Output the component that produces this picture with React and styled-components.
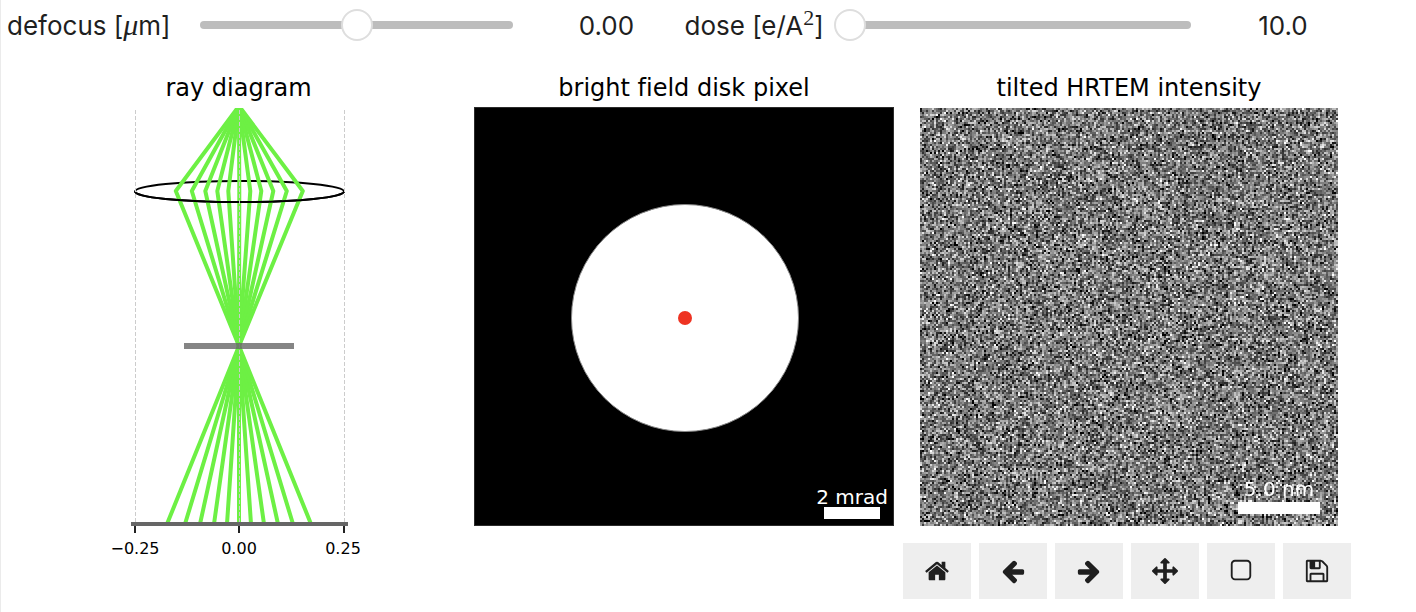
import React, { useEffect, useRef, useState } from "react";
import styled, { createGlobalStyle } from "styled-components";

const Global = createGlobalStyle`
  * { box-sizing: border-box; }
  body { margin: 0; background: #fff; }
`;

const Page = styled.main`
  min-height: 100vh;
  border-left: 1px solid #ebebeb;
  font-family: "DejaVu Sans", sans-serif;
  font-variant-ligatures: none;
  color: #000;
`;

const Controls = styled.form`
  display: grid;
  grid-template-columns: 178px 343fr 156px 150px 371fr 154px;
  align-items: center;
  height: 50px;
  padding: 0 56px 0 6px;
  font-family: Inter, "Liberation Sans", sans-serif;
  font-size: 26px;
  color: #1f1f1f;
`;

const Label = styled.label`
  padding-top: 2px;
  white-space: nowrap;
  line-height: 32px;
`;

const Mu = styled.i`
  font-family: "Liberation Serif", serif;
  font-size: 30px;
  line-height: 1;
`;

const Sup = styled.sup`
  font-family: "Liberation Serif", serif;
  font-size: 22px;
  line-height: 0;
`;

const Value = styled.output`
  padding-top: 2px;
  text-align: center;
  line-height: 32px;
`;

const SliderBox = styled.div`
  display: grid;
  align-items: center;
  &::before {
    content: "";
    grid-area: 1 / 1;
    height: 8px;
    margin: 0 15px;
    border-radius: 4px;
    background: #bdbdbd;
  }
`;

const Range = styled.input`
  grid-area: 1 / 1;
  appearance: none;
  width: 100%;
  height: 32px;
  margin: 0;
  background: transparent;
  &::-webkit-slider-thumb {
    appearance: none;
    width: 32px;
    height: 32px;
    border: 2px solid #dedede;
    border-radius: 50%;
    background: #fff;
  }
`;

const Figure = styled.section`
  display: grid;
  grid-template-columns: 447fr 420fr 418fr;
  column-gap: 26px;
  align-items: start;
  padding: 22px 78px 0 0;
`;

const Panel = styled.figure`
  display: flex;
  flex-direction: column;
  margin: 0;
  padding-left: ${(p) => (p.$indent ? "28px" : "0")};
`;

const Title = styled.figcaption`
  height: ${(p) => p.$height || 35}px;
  font-size: 24px;
  line-height: 32px;
  text-align: center;
  white-space: nowrap;
`;

const RaySvg = styled.svg`
  display: block;
  align-self: center;
  width: 260px;
  height: 454px;
`;

const Plot = styled.div`
  display: grid;
  aspect-ratio: ${(p) => p.$ratio || "1"};
  overflow: hidden;
  background: #000;
`;

const DiskSvg = styled.svg`
  grid-area: 1 / 1;
  width: 100%;
  height: 100%;
`;

const Noise = styled.canvas`
  grid-area: 1 / 1;
  width: 100%;
  height: 100%;
  image-rendering: pixelated;
`;

const ScaleBar = styled.div`
  grid-area: 1 / 1;
  align-self: end;
  justify-self: end;
  z-index: 1;
  display: flex;
  flex-direction: column;
  align-items: center;
  gap: ${(p) => p.$gap || 0}px;
  width: ${(p) => p.$width}px;
  margin: 0 ${(p) => p.$right}px ${(p) => p.$bottom}px 0;
  color: #fff;
  font-size: 20px;
  line-height: 20px;
  white-space: nowrap;
  &::after {
    content: "";
    width: 100%;
    height: 12px;
    background: #fff;
  }
`;

const Toolbar = styled.nav`
  display: flex;
  justify-content: flex-end;
  gap: 8px;
  margin-top: -18px;
  padding: 0 65px 12px 0;
`;

const ToolButton = styled.button`
  display: grid;
  place-items: center;
  width: 68px;
  height: 56px;
  padding: 0;
  border: 0;
  background: #eee;
  color: #1f1f1f;
  cursor: pointer;
`;

const ToolIcon = styled.svg`
  width: 26px;
  height: 26px;
  fill: currentColor;
`;

const TOOLS = [
  ["Home", "M1472 992v480q0 26-19 45t-45 19h-384v-384h-256v384h-384q-26 0-45-19t-19-45v-480q0-1 .5-3t.5-3l575-474 575 474q1 2 1 6zm223-69l-62 74q-8 9-21 11h-3q-13 0-21-7l-692-577-692 577q-12 8-24 7-13-2-21-11l-62-74q-8-10-7-23.5t11-21.5l719-599q32-26 76-26t76 26l244 204v-195q0-14 9-23t23-9h192q14 0 23 9t9 23v408l219 182q10 8 11 21.5t-7 23.5z"],
  ["Back", "M1664 896v128q0 53-32.5 90.5t-84.5 37.5h-704l293 294q38 36 38 90t-38 90l-75 76q-37 37-90 37-52 0-91-37l-651-652q-37-37-37-90 0-52 37-91l651-650q38-38 91-38 52 0 90 38l75 74q38 38 38 91t-38 91l-293 293h704q52 0 84.5 37.5t32.5 90.5z"],
  ["Forward", "M1600 960q0 54-37 91l-651 651q-39 37-91 37-51 0-90-37l-75-75q-38-38-38-91t38-91l293-293h-704q-52 0-84.5-37.5t-32.5-90.5v-128q0-53 32.5-90.5t84.5-37.5h704l-293-294q-38-36-38-90t38-90l75-75q38-38 90-38 53 0 91 38l651 651q37 35 37 90z"],
  ["Pan", "M1792 896q0 26-19 45l-256 256q-19 19-45 19t-45-19-19-45v-128h-384v384h128q26 0 45 19t19 45-19 45l-256 256q-19 19-45 19t-45-19l-256-256q-19-19-19-45t19-45 45-19h128v-384h-384v128q0 26-19 45t-45 19-45-19l-256-256q-19-19-19-45t19-45l256-256q19-19 45-19t45 19 19 45v128h384v-384h-128q-26 0-45-19t-19-45 19-45l256-256q19-19 45-19t45 19l256 256q19 19 19 45t-19 45-45 19h-128v384h384v-128q0-26 19-45t45-19 45 19l256 256q19 19 19 45z"],
  ["Zoom to rectangle", "M1312 256h-832q-66 0-113 47t-47 113v832q0 66 47 113t113 47h832q66 0 113-47t47-113v-832q0-66-47-113t-113-47zm288 160v832q0 119-84.5 203.5t-203.5 84.5h-832q-119 0-203.5-84.5t-84.5-203.5v-832q0-119 84.5-203.5t203.5-84.5h832q119 0 203.5 84.5t84.5 203.5z"],
  ["Save", "M512 1536h768v-384h-768v384zm896 0h128v-896q0-14-10-38.5t-20-34.5l-281-281q-10-10-34-20t-39-10v416q0 40-28 68t-68 28h-576q-40 0-68-28t-28-68v-416h-128v1280h128v-416q0-40 28-68t68-28h832q40 0 68 28t28 68v416zm-384-928v-320q0-13-9.5-22.5t-22.5-9.5h-192q-13 0-22.5 9.5t-9.5 22.5v320q0 13 9.5 22.5t22.5 9.5h192q13 0 22.5-9.5t9.5-22.5zm640 32v928q0 40-28 68t-68 28h-1344q-40 0-68-28t-28-68v-1344q0-40 28-68t68-28h928q40 0 88 20t76 48l280 280q28 28 48 76t20 88z"],
];

// Horizontal distance of each ray from the axis, at the lens and at the detector.
const RAYS = [
  [0, 0],
  [11, 12],
  [22, 25],
  [34, 39],
  [47.5, 54],
  [63.5, 72],
].flatMap(([lens, end]) => (lens ? [[-lens, -end], [lens, end]] : [[0, 0]]));

function RayDiagram() {
  return (
    <RaySvg viewBox="0 0 260 454" role="img" aria-label="ray diagram">
      <clipPath id="axes"><rect x="20" y="1" width="222" height="420" /></clipPath>
      <ellipse cx="130.5" cy="84.5" rx="104.5" ry="10.5" fill="none" stroke="#000" strokeWidth="2" />
      <g clipPath="url(#axes)" fill="none" stroke="#6df044" strokeWidth="4" strokeLinejoin="round">
        {RAYS.map(([lens, end]) => (
          <polyline key={lens} points={`130,-1 ${130.3 + lens},84 130,239 ${130 + end},417`} />
        ))}
      </g>
      <path d="M26 84.500A104.500 10.500 0 0 0 235 84.500" fill="none" stroke="#000" strokeWidth="2" />
      <path d="M26.500 3V416M130.500 3V416M235.500 3V416" stroke="#ccc" strokeWidth="1" strokeDasharray="4 2" />
      <rect x="75" y="236" width="110" height="6" fill="#666" fillOpacity=".8" />
      <rect x="22" y="415" width="217" height="4" fill="#666" />
      <path d="M26 419v7M130 419v7M235 419v7" stroke="#222" strokeWidth="2" />
      <g fontFamily="DejaVu Sans, sans-serif" fontSize="16" textAnchor="middle">
        <text x="26" y="447">−0.25</text>
        <text x="130" y="447">0.00</text>
        <text x="234" y="447">0.25</text>
      </g>
    </RaySvg>
  );
}

// Shot noise from a seeded generator, so that the pattern is the same on every load.
function NoiseImage() {
  const ref = useRef(null);
  useEffect(() => {
    const ctx = ref.current.getContext("2d");
    const { width, height } = ref.current;
    const img = ctx.createImageData(width, height);
    let seed = 12345;
    const rand = () => {
      seed = (Math.imul(seed, 1664525) + 1013904223) >>> 0;
      return seed / 4294967296;
    };
    for (let i = 0; i < img.data.length; i += 4) {
      const v = 120 + (rand() + rand() + rand() - 1.5) * 112;
      img.data[i] = img.data[i + 1] = img.data[i + 2] = v;
      img.data[i + 3] = 255;
    }
    ctx.putImageData(img, 0, 0);
  }, []);
  return <Noise ref={ref} width={209} height={209} />;
}

export default function App() {
  const [defocus, setDefocus] = useState(0);
  const [dose, setDose] = useState(10);
  return (
    <Page>
      <Global />
      <Controls>
        <Label htmlFor="defocus">defocus [<Mu>μ</Mu>m]</Label>
        <SliderBox>
          <Range id="defocus" type="range" min="-1" max="1" step="0.01" value={defocus} onChange={(e) => setDefocus(+e.target.value)} />
        </SliderBox>
        <Value htmlFor="defocus">{defocus.toFixed(2)}</Value>
        <Label htmlFor="dose">dose [e/A<Sup>2</Sup>]</Label>
        <SliderBox>
          <Range id="dose" type="range" min="10" max="1000" step="10" value={dose} onChange={(e) => setDose(+e.target.value)} />
        </SliderBox>
        <Value htmlFor="dose">{dose.toFixed(1)}</Value>
      </Controls>
      <Figure>
        <Panel $indent>
          <Title>ray diagram</Title>
          <RayDiagram />
        </Panel>
        <Panel>
          <Title>bright field disk pixel</Title>
          <Plot $ratio="420 / 419">
            <DiskSvg viewBox="0 0 420 419">
              <circle cx="211" cy="211" r="113.500" fill="#fff" stroke="#888" strokeWidth="1" />
              <circle cx="211" cy="211" r="7" fill="#ee3322" />
              <rect x="0.500" y="0.500" width="419" height="418" fill="none" stroke="#2b2b2b" />
            </DiskSvg>
            <ScaleBar $width={56} $right={14} $bottom={7}>2 mrad</ScaleBar>
          </Plot>
        </Panel>
        <Panel>
          <Title $height={36}>tilted HRTEM intensity</Title>
          <Plot>
            <NoiseImage />
            <ScaleBar $width={82} $right={18} $bottom={12} $gap={3}>5.0 nm</ScaleBar>
          </Plot>
        </Panel>
      </Figure>
      <Toolbar aria-label="Figure tools">
        {TOOLS.map(([name, d]) => (
          <ToolButton key={name} type="button" aria-label={name}>
            <ToolIcon viewBox="0 0 1792 1792"><path d={d} /></ToolIcon>
          </ToolButton>
        ))}
      </Toolbar>
    </Page>
  );
}
